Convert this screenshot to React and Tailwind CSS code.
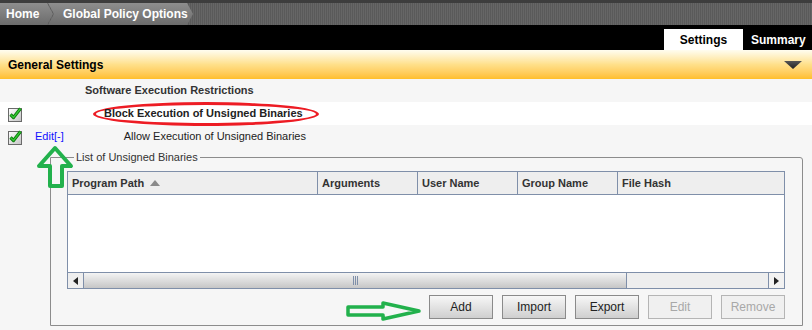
import React from "react";

function Check() {
  return (
    <svg width="16" height="16" viewBox="0 0 16 16" className="block">
      <defs>
        <linearGradient id="cbg" x1="0" y1="0" x2="1" y2="1">
          <stop offset="0" stopColor="#ffffff" />
          <stop offset="1" stopColor="#c4c4c4" />
        </linearGradient>
      </defs>
      <rect x="1.5" y="2.5" width="13" height="13" fill="url(#cbg)" stroke="#6a6a6a" />
      <path d="M3.5 8.5 L6.5 11.5 L13.5 2.5" fill="none" stroke="#0b7a0b" strokeWidth="3.2" strokeLinejoin="round" />
      <path d="M3.5 8.5 L6.5 11.5 L13.5 2.5" fill="none" stroke="#33c833" strokeWidth="1.3" />
    </svg>
  );
}

function Btn({ children, disabled }) {
  return (
    <div
      className={
        "w-[64px] h-[24px] flex items-center justify-center text-[12px] border " +
        (disabled
          ? "border-[#b5b5b5] bg-[#f0f0f0] text-[#a8a8a8]"
          : "border-[#8a8a8a] bg-linear-to-b from-[#f7f7f7] to-[#cfcfcf] text-[#222]")
      }
    >
      {children}
    </div>
  );
}

export default function App() {
  const cols = [
    { t: "Program Path", w: "w-[250px]", sort: true },
    { t: "Arguments", w: "w-[100px]" },
    { t: "User Name", w: "w-[100px]" },
    { t: "Group Name", w: "w-[100px]" },
    { t: "File Hash", w: "flex-1", last: true },
  ];
  return (
    <div className="relative w-[812px] h-[330px] overflow-hidden bg-[#f6f6f6] font-['Liberation_Sans',Arial,sans-serif]">
      {/* top band */}
      <div className="h-[3px] bg-[#3d3d3d]" />
      {/* breadcrumb */}
      <div className="h-[22px] flex [background-image:repeating-linear-gradient(90deg,#5a5a5a_0px,#5a5a5a_1px,#666666_1px,#666666_2px)]">
        <div className="w-[53px] h-full flex items-center pl-[6px] text-white font-bold text-[12px] bg-linear-to-b from-[#8e8e8e] to-[#6c6c6c] [clip-path:polygon(0_0,47px_0,53px_50%,47px_100%,0_100%)]">
          Home
        </div>
        <div className="w-[146px] -ml-[5px] h-full flex items-center pl-[15px] text-white font-bold text-[12px] bg-linear-to-b from-[#8e8e8e] to-[#6c6c6c] [clip-path:polygon(0_0,139px_0,145px_50%,139px_100%,0_100%,6px_50%)]">
          Global Policy Options
        </div>
      </div>
      {/* black bar with tabs */}
      <div className="h-[25px] bg-black flex items-end">
        <div className="ml-[664px] w-[79px] h-[21px] bg-white flex items-center justify-center text-black font-bold text-[12px]">
          Settings
        </div>
        <div className="h-[21px] pl-[8px] flex items-center text-white font-bold text-[12px] whitespace-nowrap">
          Summary
        </div>
      </div>
      {/* orange header */}
      <div className="h-[29px] bg-linear-to-b from-[#fffdf0] via-[#ffe08a] to-[#ffbe28] flex items-center justify-between pl-[8px] pr-[10px]">
        <span className="text-black font-bold text-[12px]">General Settings</span>
        <svg width="18" height="8" viewBox="0 0 18 8">
          <defs>
            <linearGradient id="tri" x1="0" y1="0" x2="0" y2="1">
              <stop offset="0" stopColor="#555" />
              <stop offset="1" stopColor="#222" />
            </linearGradient>
          </defs>
          <path d="M0 0 L18 0 L9 8 Z" fill="url(#tri)" />
        </svg>
      </div>
      {/* section label */}
      <div className="h-[23px] flex items-center pl-[85px] text-[11px] font-bold text-[#333]">
        Software Execution Restrictions
      </div>
      {/* row 1 */}
      <div className="h-[23px] bg-white flex items-center">
        <div className="ml-[7px] w-[16px]">
          <Check />
        </div>
        <span className="ml-[70px] w-[226px] h-[24px] shrink-0 flex items-center pl-[8px] border-[3px] border-[#ed1c24] rounded-[50%] text-[11px] font-bold text-[#222] whitespace-nowrap">
          Block Execution of Unsigned Binaries
        </span>
      </div>
      {/* row 2 */}
      <div className="h-[23px] flex items-center">
        <div className="ml-[7px] w-[16px]">
          <Check />
        </div>
        <span className="ml-[12px] text-[11px] text-[#1010ff]">Edit[-]</span>
        <span className="ml-[60px] text-[11px] text-[#222]">Allow Execution of Unsigned Binaries</span>
      </div>
      {/* fieldset */}
      <fieldset className="mt-[3px] ml-[50px] w-[753px] border border-[#8c8c8c] rounded-tr-[3px] px-[16px] pb-[6px]">
        <legend className="ml-[7px] px-[2px] text-[11px] leading-[13px] text-[#333]">List of Unsigned Binaries</legend>
        <div className="mt-[7px] w-[718px] border border-[#7f8fa9] bg-white">
          <div className="h-[23px] flex bg-[#eeeeee] border-b border-[#7f8fa9]">
            {cols.map((c) => (
              <div
                key={c.t}
                className={
                  c.w +
                  " h-full flex items-center pl-[4px] text-[11px] font-bold text-[#333] " +
                  (c.last ? "" : "border-r border-[#7f8fa9]")
                }
              >
                {c.t}
                {c.sort && (
                  <svg width="10" height="6" viewBox="0 0 10 6" className="ml-[6px]">
                    <path d="M0 6 L5 0 L10 6 Z" fill="#8a8a8a" />
                  </svg>
                )}
              </div>
            ))}
          </div>
          <div className="h-[77px] bg-white" />
          {/* scrollbar */}
          <div className="h-[16px] flex border-t border-[#7f8fa9] bg-[#eeeeee]">
            <div className="w-[16px] h-full flex items-center justify-center border-r border-[#7f8fa9]">
              <svg width="5" height="8" viewBox="0 0 5 8">
                <path d="M5 0 L0 4 L5 8 Z" fill="#222" />
              </svg>
            </div>
            <div className="w-[543px] h-full flex items-center justify-center bg-linear-to-b from-[#f4f4f4] to-[#c6c6c6] border-r border-[#7f8fa9]">
              <div className="flex gap-[1px]">
                <div className="w-[1px] h-[9px] bg-[#7f8fa9]" />
                <div className="w-[1px] h-[9px] bg-[#7f8fa9]" />
                <div className="w-[1px] h-[9px] bg-[#7f8fa9]" />
              </div>
            </div>
            <div className="flex-1" />
            <div className="w-[16px] h-full flex items-center justify-center border-l border-[#7f8fa9] bg-[#f2f2f2]">
              <svg width="5" height="8" viewBox="0 0 5 8">
                <path d="M0 0 L5 4 L0 8 Z" fill="#222" />
              </svg>
            </div>
          </div>
        </div>
        <div className="mt-[6px] flex justify-end gap-[9px] w-[718px]">
          <Btn>Add</Btn>
          <Btn>Import</Btn>
          <Btn>Export</Btn>
          <Btn disabled>Edit</Btn>
          <Btn disabled>Remove</Btn>
        </div>
      </fieldset>
      {/* annotation arrows */}
      <svg className="absolute inset-0 pointer-events-none" width="812" height="330" viewBox="0 0 812 330">
        <path
          d="M55 148 L71 166 L62 166 L62 186 L50 186 L50 166 L39 166 Z"
          fill="none"
          stroke="#22b14c"
          strokeWidth="4"
          strokeLinejoin="round"
        />
        <path
          d="M348 307 L383 307 L383 303 L419 311 L383 319 L383 315 L348 315 Z"
          fill="none"
          stroke="#22b14c"
          strokeWidth="3.5"
          strokeLinejoin="round"
        />
      </svg>
    </div>
  );
}
